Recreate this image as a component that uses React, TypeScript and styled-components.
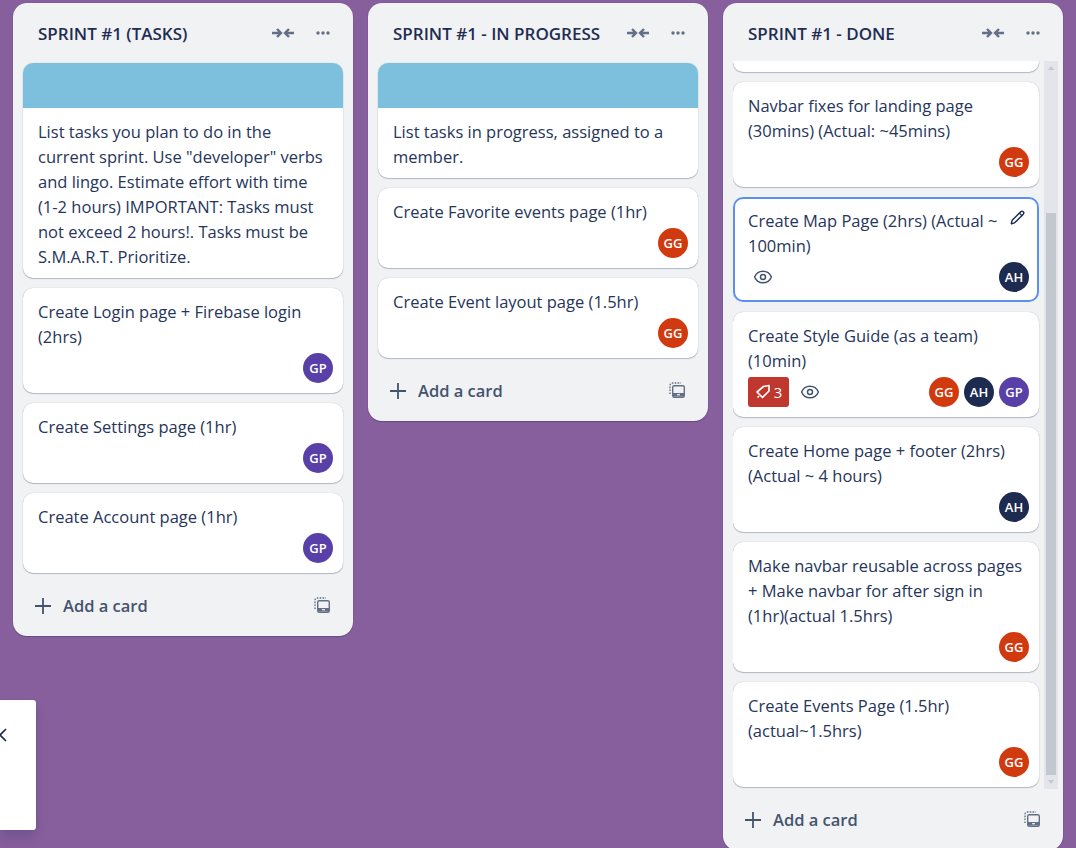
import styled, { createGlobalStyle } from "styled-components";
import { Eye, Pencil } from "lucide-react";

const GlobalStyle = createGlobalStyle`
  html, body {
    margin: 0;
    height: 100%;
    overflow: hidden;
    background: #875f9c;
    font-family: "Open Sans", "Noto Sans", sans-serif;
    font-size: 16px;
    color: #172b4d;
  }
  * { box-sizing: border-box; }
`;

const Board = styled.div`
  display: flex;
  align-items: flex-start;
  gap: 15px;
  height: 848px;
  padding: 3px 0 0 13px;
  overflow: hidden;
`;

const List = styled.section<{ $height?: number }>`
  display: flex;
  flex-direction: column;
  flex: none;
  width: 340px;
  height: ${({ $height }) => ($height ? `${$height}px` : "auto")};
  border-radius: 14px;
  background: #f1f2f4;
  box-shadow: 0 1px 1px #091e4240, 0 0 1px #091e424f;
`;

const ListHeader = styled.header`
  display: flex;
  align-items: center;
  flex: none;
  height: 58px;
  padding: 4px 23px 2px 25px;
`;

const ListTitle = styled.h2`
  flex: 1;
  margin: 0;
  font-size: 17px;
  font-weight: 600;
  color: #1e2d52;
`;

const HeaderIcons = styled.div`
  display: flex;
  align-items: center;
  gap: 22px;
  color: #626f86;
`;

const Cards = styled.div`
  display: flex;
  flex-direction: column;
  gap: 10px;
  padding: 2px 10px;
`;

const ScrollArea = styled.div`
  display: flex;
  flex: 1;
  min-height: 0;
  padding: 0 5px 0 10px;
`;

const ScrollCards = styled(Cards)`
  flex: 1;
  justify-content: flex-end;
  padding: 2px 5px 2px 0;
  min-width: 0;
  overflow: hidden;
`;

const ScrollBar = styled.div`
  display: flex;
  flex-direction: column;
  flex: none;
  width: 14px;
  background: #e4e5ea;
`;

const ScrollArrow = styled.span<{ $down?: boolean }>`
  display: flex;
  align-items: center;
  justify-content: center;
  flex: none;
  height: 14px;

  &::before {
    content: "";
    border-left: 3.5px solid transparent;
    border-right: 3.5px solid transparent;
    ${({ $down }) =>
      $down ? "border-top: 4px solid #c3c7d0;" : "border-bottom: 4px solid #c3c7d0;"}
  }
`;

const ScrollTrack = styled.div`
  display: flex;
  flex: 1;
  flex-direction: column;
  justify-content: flex-end;
  padding: 0 2px;
`;

const ScrollThumb = styled.div<{ $height: number }>`
  height: ${({ $height }) => $height}px;
  background: #c3c7d0;
`;

const Card = styled.article<{ $selected?: boolean }>`
  position: relative;
  flex: none;
  border-radius: 10px;
  background: #fff;
  box-shadow: ${({ $selected }) =>
    $selected ? "0 0 0 2px #5b8ff0 inset" : "0 1px 1px #091e4240, 0 0 1px #091e424f"};
  overflow: hidden;
`;

const HiddenCard = styled(Card)`
  height: 188px;
`;

const Cover = styled.div`
  height: 45px;
  background: #7cc0de;
`;

const CardBody = styled.div<{ $note?: boolean }>`
  padding: ${({ $note }) => ($note ? "11px 15px 9px" : "11px 10px 10px 15px")};
`;

const CardText = styled.p`
  margin: 0;
  font-size: 16.5px;
  line-height: 25px;
  color: #26355a;
`;

const CardFoot = styled.div`
  display: flex;
  align-items: center;
  min-height: 30px;
  margin-top: 4px;
`;

const Badge = styled.span`
  display: flex;
  align-items: center;
  justify-content: center;
  gap: 3px;
  width: 41px;
  height: 30px;
  border-radius: 3px;
  background: #c0372d;
  color: #fff;
  font-size: 15px;
`;

const Watch = styled.span<{ $first?: boolean }>`
  display: flex;
  margin-left: ${({ $first }) => ($first ? "5px" : "11px")};
  color: #44546f;
`;

const Members = styled.div`
  display: flex;
  gap: 5px;
  margin-left: auto;
`;

const Avatar = styled.span<{ $bg: string }>`
  display: flex;
  align-items: center;
  justify-content: center;
  width: 30px;
  height: 30px;
  border-radius: 50%;
  background: ${({ $bg }) => $bg};
  color: #fff;
  font-size: 13px;
  font-weight: 600;
`;

const EditIcon = styled.span`
  position: absolute;
  top: 13px;
  right: 14px;
  display: flex;
  color: #172b4d;
`;

const Footer = styled.footer`
  display: flex;
  align-items: center;
  flex: none;
  height: 61px;
  padding: 0 22px;
  color: #44546f;
`;

const AddLabel = styled.span`
  flex: 1;
  margin-left: 12px;
  font-size: 16.5px;
  font-weight: 600;
`;

const TemplateWrap = styled.span`
  display: flex;
  margin-top: -1px;
  margin-right: 1px;
  color: #626f86;
`;

const SidePanel = styled.aside`
  position: fixed;
  left: 0;
  top: 700px;
  display: flex;
  width: 36px;
  height: 130px;
  padding-top: 27px;
  border-radius: 0 3px 3px 0;
  background: #fff;
  box-shadow: 0 8px 12px #091e4226, 0 0 1px #091e424f;
  color: #172b4d;
  overflow: hidden;
`;

const CloseIcon = styled.svg`
  margin-left: -8px;
`;

const CollapseIcon = () => (
  <svg width="22" height="10" viewBox="0 0 22 10" fill="none" stroke="currentColor" strokeWidth="2.4">
    <path d="M0 5h9M5 1l4 4-4 4M22 5h-9M17 1l-4 4 4 4" />
  </svg>
);

const DotsIcon = () => (
  <svg width="14" height="4" viewBox="0 0 14 4" fill="currentColor">
    <circle cx="2" cy="2" r="1.7" />
    <circle cx="7" cy="2" r="1.7" />
    <circle cx="12" cy="2" r="1.7" />
  </svg>
);

const PlusIcon = () => (
  <svg width="16" height="16" viewBox="0 0 16 16" stroke="currentColor" strokeWidth="1.8">
    <path d="M8 0v16M0 8h16" />
  </svg>
);

const TemplateIcon = () => (
  <svg width="16" height="16" viewBox="0 0 16 16" fill="none" stroke="currentColor">
    <path d="M1 12V3.5A2.5 2.5 0 0 1 3.5 1H12" strokeWidth="1.4" strokeDasharray="1.6 1.3" />
    <rect x="3.7" y="3.7" width="11.6" height="11.6" rx="1.6" strokeWidth="1.4" />
    <path d="M4 11h11v3.5H4z" fill="currentColor" stroke="none" />
    <path d="M8 12.7h3" stroke="#f1f2f4" strokeWidth="1.2" />
  </svg>
);

const TagIcon = () => (
  <svg width="16" height="16" viewBox="0 0 16 16" fill="none" stroke="currentColor" strokeWidth="1.7" strokeLinejoin="round">
    <path d="M8.5 2.5l5.5-1v5.5L7.5 13.5 2 8z" />
    <path d="M2.5 13.5l1.5-1.5" />
  </svg>
);

const AVATARS: Record<string, string> = { GG: "#d1390f", AH: "#1d2b50", GP: "#5940a8" };

type CardData = {
  text: string;
  members?: string[];
  cover?: boolean;
  selected?: boolean;
  watch?: boolean;
  votes?: number;
};

const TaskCard = ({ text, members, cover, selected, watch, votes }: CardData) => (
  <Card $selected={selected}>
    {cover && <Cover />}
    <CardBody $note={!members}>
      <CardText>{text}</CardText>
      {members && (
        <CardFoot>
          {votes && (
            <Badge>
              <TagIcon />
              {votes}
            </Badge>
          )}
          {watch && (
            <Watch $first={!votes}>
              <Eye size={20} strokeWidth={1.8} />
            </Watch>
          )}
          <Members>
            {members.map((m) => (
              <Avatar key={m} $bg={AVATARS[m]}>
                {m}
              </Avatar>
            ))}
          </Members>
        </CardFoot>
      )}
    </CardBody>
    {selected && (
      <EditIcon>
        <Pencil size={15} strokeWidth={2.2} />
      </EditIcon>
    )}
  </Card>
);

const tasks: CardData[] = [
  {
    cover: true,
    text: 'List tasks you plan to do in the current sprint. Use "developer" verbs and lingo. Estimate effort with time (1-2 hours) IMPORTANT: Tasks must not exceed 2 hours!. Tasks must be S.M.A.R.T. Prioritize.',
  },
  { text: "Create Login page + Firebase login (2hrs)", members: ["GP"] },
  { text: "Create Settings page (1hr)", members: ["GP"] },
  { text: "Create Account page (1hr)", members: ["GP"] },
];

const inProgress: CardData[] = [
  { cover: true, text: "List tasks in progress, assigned to a member." },
  { text: "Create Favorite events page (1hr)", members: ["GG"] },
  { text: "Create Event layout page (1.5hr)", members: ["GG"] },
];

const done: CardData[] = [
  { text: "Navbar fixes for landing page (30mins) (Actual: ~45mins)", members: ["GG"] },
  { text: "Create Map Page (2hrs) (Actual ~ 100min)", members: ["AH"], selected: true, watch: true },
  { text: "Create Style Guide (as a team) (10min)", members: ["GG", "AH", "GP"], watch: true, votes: 3 },
  { text: "Create Home page + footer (2hrs) (Actual ~ 4 hours)", members: ["AH"] },
  // word joiner keeps "(1hr)(actual" together on one line
  { text: "Make navbar reusable across pages + Make navbar for after sign in (1hr)\u2060(actual 1.5hrs)", members: ["GG"] },
  { text: "Create Events Page (1.5hr) (actual~1.5hrs)", members: ["GG"] },
];

const Head = ({ title }: { title: string }) => (
  <ListHeader>
    <ListTitle>{title}</ListTitle>
    <HeaderIcons>
      <CollapseIcon />
      <DotsIcon />
    </HeaderIcons>
  </ListHeader>
);

const Foot = () => (
  <Footer>
    <PlusIcon />
    <AddLabel>Add a card</AddLabel>
    <TemplateWrap>
      <TemplateIcon />
    </TemplateWrap>
  </Footer>
);

export default function App() {
  return (
    <>
      <GlobalStyle />
      <Board>
        <List>
          <Head title="SPRINT #1 (TASKS)" />
          <Cards>
            {tasks.map((c) => (
              <TaskCard key={c.text} {...c} />
            ))}
          </Cards>
          <Foot />
        </List>
        <List>
          <Head title="SPRINT #1 - IN PROGRESS" />
          <Cards>
            {inProgress.map((c) => (
              <TaskCard key={c.text} {...c} />
            ))}
          </Cards>
          <Foot />
        </List>
        <List $height={847}>
          <Head title="SPRINT #1 - DONE" />
          <ScrollArea>
            <ScrollCards>
              <HiddenCard />
              {done.map((c) => (
                <TaskCard key={c.text} {...c} />
              ))}
            </ScrollCards>
            <ScrollBar>
              <ScrollArrow />
              <ScrollTrack>
                <ScrollThumb $height={562} />
              </ScrollTrack>
              <ScrollArrow $down />
            </ScrollBar>
          </ScrollArea>
          <Foot />
        </List>
      </Board>
      <SidePanel>
        <CloseIcon width="16" height="16" viewBox="0 0 16 16" fill="none" stroke="currentColor" strokeWidth="1.6">
          <path d="M2 2l12 12M14 2L2 14" />
        </CloseIcon>
      </SidePanel>
    </>
  );
}
